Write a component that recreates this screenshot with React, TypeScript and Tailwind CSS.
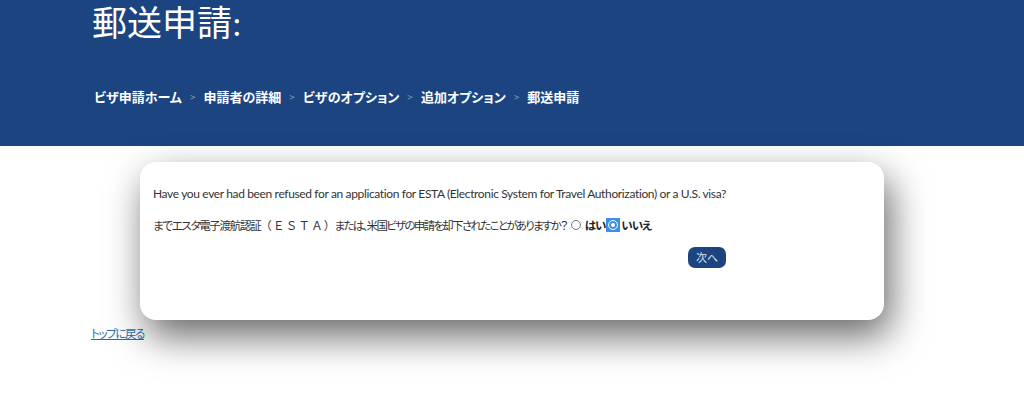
import { useState } from 'react'

const crumbs = ['ビザ申請ホーム', '申請者の詳細', 'ビザのオプション', '追加オプション']

const App = () => {
  const [answer, setAnswer] = useState<'yes' | 'no'>('no')

  return (
    <div className="min-h-[409px] bg-white font-['Noto_Sans','Noto_Sans_CJK_JP',sans-serif]">
      {/* Header */}
      <header className="h-[146px] bg-[#1b4480] pl-[92px]">
        <h1 className="pt-[3px] text-[35px] leading-[44px] text-white font-['Liberation_Serif','Noto_Sans_CJK_JP',serif]">
          郵送申請:
        </h1>
        <nav className="mt-[40px] pl-[2px] flex items-center text-[13px] font-semibold text-white font-['Noto_Sans_CJK_JP',sans-serif] [font-feature-settings:'palt']">
          {crumbs.map((c) => (
            <span key={c} className="flex items-center">
              <span>{c}</span>
              <span className="mx-[8px] text-[10px] font-normal text-[#8a9bb8]">&gt;</span>
            </span>
          ))}
          <span className="font-bold">郵送申請</span>
        </nav>
      </header>

      {/* Question card */}
      <main className="pt-4">
        <div className="ml-[140px] w-[744px] h-[158px] rounded-[16px] bg-white pl-[13px] pt-[24px] shadow-[6px_16px_38px_rgba(0,0,0,0.6)]">
          <p className="text-[12px] leading-[16px] text-[#333] tracking-[-0.36px] font-['Lato','Noto_Sans_CJK_JP',sans-serif]">
            Have you ever had been refused for an application for ESTA (Electronic System for Travel Authorization) or a U.S. visa?
          </p>
          <div className="mt-[15px] flex items-center text-[11.5px] leading-[16px] text-[#333] font-['Noto_Sans_CJK_JP',sans-serif]">
            <span className="tracking-[-1.3px] [font-feature-settings:'palt']">までエスタ電子渡航認証</span>
            <span className="tracking-[1.2px] -mr-[2px]">（ＥＳＴＡ）</span>
            <span className="tracking-[-1.7px] [font-feature-settings:'palt']">または、米国ビザの申請を却下されたことがありますか？</span>
            <button
              onClick={() => setAnswer('yes')}
              className="ml-[3px] flex h-[13px] w-[13px] items-center justify-center"
            >
              <span className="h-[10px] w-[10px] rounded-full border border-[#777] bg-white" />
            </button>
            <span className="ml-[2px] font-bold text-[#222] tracking-[-1px] [font-feature-settings:'palt']">はい</span>
            <button
              onClick={() => setAnswer('no')}
              className={`ml-[1px] flex h-[14px] w-[14px] items-center justify-center ${answer === 'no' ? 'bg-[#3d8ee8]' : ''}`}
            >
              <span className="flex h-[10px] w-[10px] items-center justify-center rounded-full border border-white bg-[#3d8ee8]">
                <span className="h-[4px] w-[4px] rounded-full bg-white" />
              </span>
            </button>
            <span className="ml-[1px] font-bold text-[#222] tracking-[-1px] [font-feature-settings:'palt']">いいえ</span>
          </div>
          <div className="mt-[11px] pl-[535px]">
            <button className="h-[21px] w-[38px] rounded-[7px] bg-[#1b4480] text-[11px] leading-[21px] text-[#dfe6f0] font-['Noto_Sans_CJK_JP',sans-serif]">
              次へ
            </button>
          </div>
        </div>

        <a
          href="#"
          className="ml-[91px] mt-[1px] inline-block text-[11.5px] leading-[16px] tracking-[-1.4px] text-[#2a6aa5] underline font-['Noto_Sans_CJK_JP',sans-serif] [font-feature-settings:'palt']"
        >
          トップに戻る
        </a>
      </main>
    </div>
  )
}

export default App
